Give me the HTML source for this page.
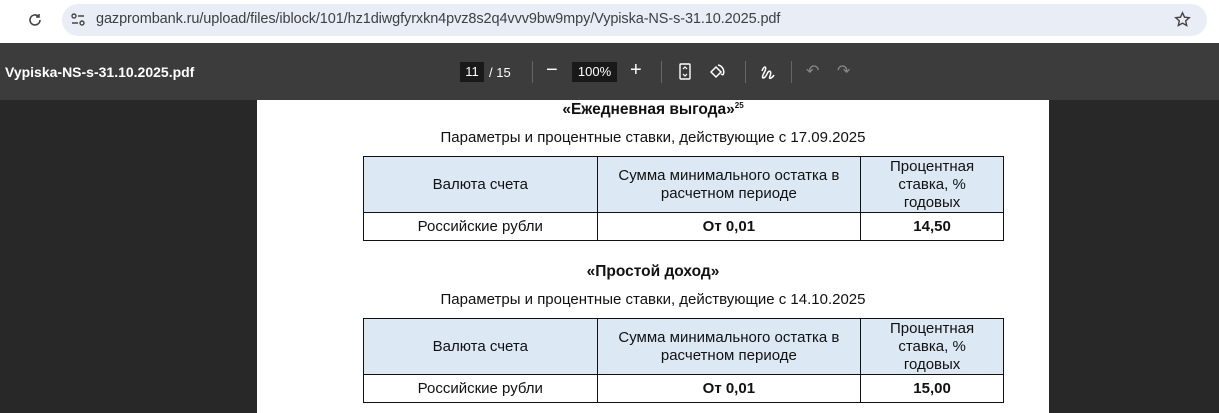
<!DOCTYPE html><html><head><meta charset="utf-8"><style>
*{margin:0;padding:0;box-sizing:border-box}
body{width:1219px;height:413px;overflow:hidden;background:#282828;font-family:"Liberation Sans",sans-serif;position:relative}
.top{position:absolute;left:0;top:0;width:1219px;height:43px;background:#fff}
.pill{position:absolute;left:62px;top:4px;width:1145px;height:32px;border-radius:16px;background:#e9eef6}
.url{position:absolute;left:96px;top:11px;font-size:14.5px;color:#3c4043;letter-spacing:-0.1px}
.tb{position:absolute;left:0;top:43px;width:1219px;height:57px;background:#3c3c3c;color:#fff}
.page{position:absolute;left:257px;top:100px;width:792px;height:313px;background:#fff;color:#111}
.t{position:absolute;width:792px;text-align:center}
table{position:absolute;left:106px;width:641px;border-collapse:collapse;font-size:15px}
td{border:1.5px solid #111;text-align:center;line-height:18px;padding:0}
.h td{background:#dce9f5;height:56px}
.r td{height:28px;line-height:26px}
b{font-weight:bold}
</style></head><body>
<div class="top">
<div style="position:absolute;left:-4px;top:12px;color:#999;font-size:14px">›</div>
<svg style="position:absolute;left:27px;top:12px" width="16" height="16" viewBox="0 0 16 16"><path d="M13 8a5 5 0 1 1-1.5-3.6M12 2v3h-3" fill="none" stroke="#444" stroke-width="1.6"/></svg>
<div class="pill"></div>
<svg style="position:absolute;left:70px;top:13px" width="16" height="14" viewBox="0 0 16 14"><circle cx="4" cy="3" r="2" fill="none" stroke="#444" stroke-width="1.4"/><path d="M8 3h6M2 10h6" stroke="#444" stroke-width="1.4"/><circle cx="12" cy="10" r="2" fill="none" stroke="#444" stroke-width="1.4"/></svg>
<div class="url">gazprombank.ru/upload/files/iblock/101/hz1diwgfyrxkn4pvz8s2q4vvv9bw9mpy/Vypiska-NS-s-31.10.2025.pdf</div>
<svg style="position:absolute;left:1174px;top:11px" width="17" height="17" viewBox="0 0 24 24"><path d="M12 2.5l2.9 6.2 6.6.7-5 4.5 1.4 6.6L12 17.2 6.1 20.5l1.4-6.6-5-4.5 6.6-.7z" fill="none" stroke="#444" stroke-width="2"/></svg>
</div>
<div class="tb">
<div style="position:absolute;left:5px;top:21px;font-size:14px;font-weight:bold">Vypiska-NS-s-31.10.2025.pdf</div>
<div style="position:absolute;left:460px;top:19px;width:24px;height:20px;background:#191919;font-size:13px;text-align:center;line-height:20px">11</div>
<div style="position:absolute;left:489px;top:22px;font-size:13px">/ 15</div>
<div style="position:absolute;left:532px;top:18px;width:1px;height:22px;background:#666"></div>
<div style="position:absolute;left:546px;top:16px;font-size:20px">−</div>
<div style="position:absolute;left:572px;top:19px;width:45px;height:20px;background:#191919;font-size:13px;text-align:center;line-height:20px">100%</div>
<div style="position:absolute;left:630px;top:16px;font-size:20px">+</div>
<div style="position:absolute;left:661px;top:18px;width:1px;height:22px;background:#666"></div>
<svg style="position:absolute;left:679px;top:20px" width="12" height="17" viewBox="0 0 12 17"><rect x="1" y="1" width="10" height="15" rx="1" fill="none" stroke="#fff" stroke-width="1.4"/><path d="M4 6l2-2 2 2M4 11l2 2 2-2" fill="none" stroke="#fff" stroke-width="1.2"/></svg>
<svg style="position:absolute;left:708px;top:19px" width="19" height="19" viewBox="0 0 19 19"><path d="M3 10l5-5 5 5-5 5z" fill="none" stroke="#fff" stroke-width="1.5"/><path d="M10 3a7 7 0 0 1 5 10M15 13l-2-1" fill="none" stroke="#fff" stroke-width="1.5"/></svg>
<div style="position:absolute;left:745px;top:18px;width:1px;height:22px;background:#666"></div>
<svg style="position:absolute;left:760px;top:20px" width="16" height="17" viewBox="0 0 16 17"><path d="M2 8c2-6 6-5 2 2s1 6 3 1 5-3 3 2 3 1 4-1" fill="none" stroke="#fff" stroke-width="1.5"/></svg>
<div style="position:absolute;left:791px;top:18px;width:1px;height:22px;background:#666"></div>
<div style="position:absolute;left:806px;top:18px;font-size:16px;color:#888">↶</div>
<div style="position:absolute;left:837px;top:18px;font-size:16px;color:#888">↷</div>
</div>
<div class="page">
<div class="t" style="top:1px;font-size:15.5px;font-weight:bold">«Ежедневная выгода»<sup style="font-size:8px">25</sup></div>
<div class="t" style="top:29px;font-size:15px">Параметры и процентные ставки, действующие с 17.09.2025</div>
<table style="top:56px"><colgroup><col style="width:234px"><col style="width:264px"><col style="width:143px"></colgroup>
<tr class="h"><td>Валюта счета</td><td>Сумма минимального остатка в<br>расчетном периоде</td><td>Процентная<br>ставка, %<br>годовых</td></tr>
<tr class="r"><td>Российские рубли</td><td><b>От 0,01</b></td><td><b>14,50</b></td></tr></table>
<div class="t" style="top:163px;font-size:15.5px;font-weight:bold">«Простой доход»</div>
<div class="t" style="top:191px;font-size:15px">Параметры и процентные ставки, действующие с 14.10.2025</div>
<table style="top:218px"><colgroup><col style="width:234px"><col style="width:264px"><col style="width:143px"></colgroup>
<tr class="h"><td>Валюта счета</td><td>Сумма минимального остатка в<br>расчетном периоде</td><td>Процентная<br>ставка, %<br>годовых</td></tr>
<tr class="r"><td>Российские рубли</td><td><b>От 0,01</b></td><td><b>15,00</b></td></tr></table>
</div>
</body></html>
